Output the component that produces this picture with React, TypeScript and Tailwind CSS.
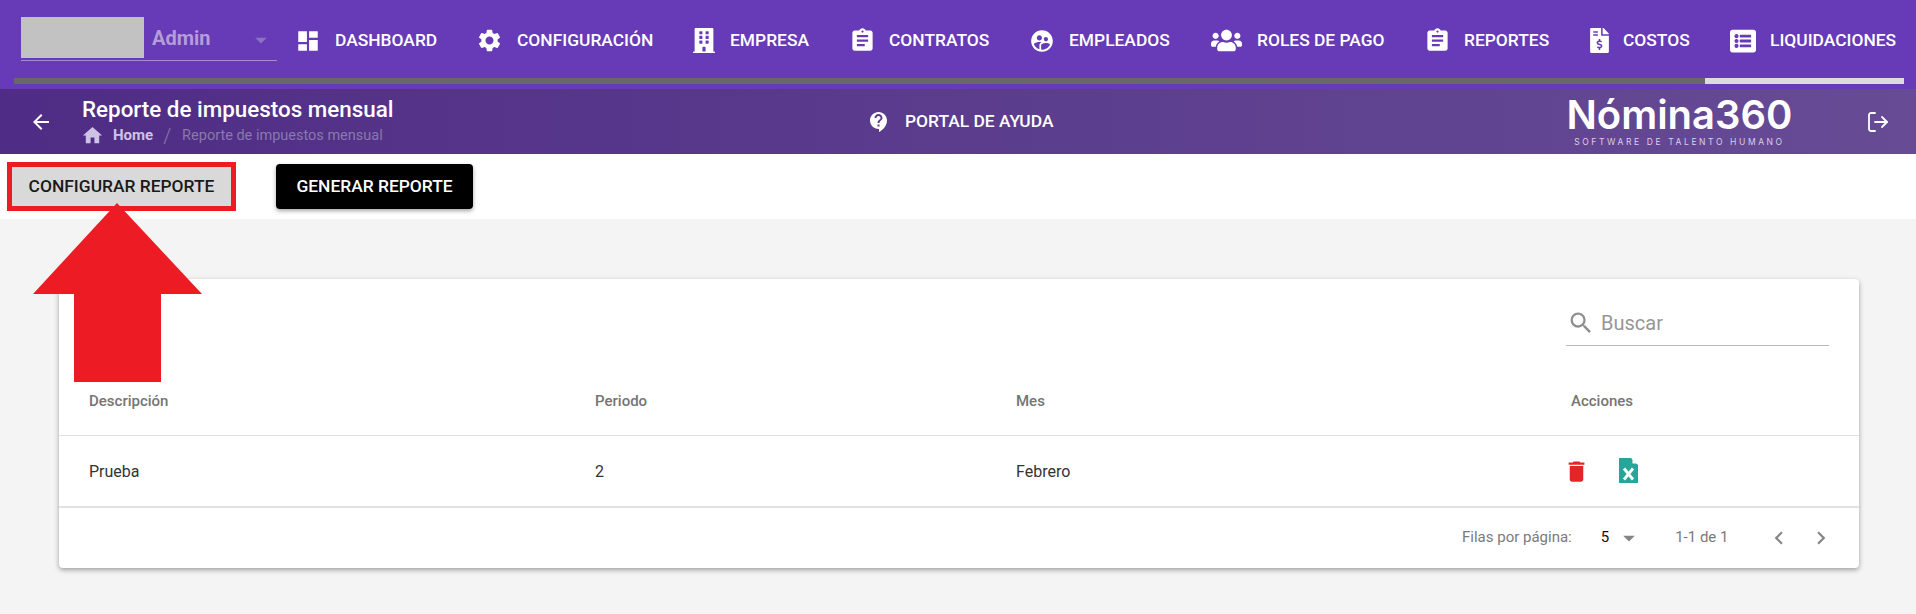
import {
  MdDashboard,
  MdSettings,
  MdAssignment,
  MdSupervisedUserCircle,
  MdArrowBack,
  MdHome,
  MdContactSupport,
  MdSearch,
  MdDelete,
  MdArrowDropDown,
  MdChevronLeft,
  MdChevronRight,
} from 'react-icons/md'
import { FaBuilding, FaUsers, FaFileInvoiceDollar, FaListAlt } from 'react-icons/fa'
import { LogOut } from 'lucide-react'

const tabs = [
  { label: 'DASHBOARD', icon: <MdDashboard className="size-[26px] -ml-[3px]" />, width: 'w-[181px]', box: 'w-[37px]' },
  { label: 'CONFIGURACIÓN', icon: <MdSettings className="size-[27px] -ml-[3px]" />, width: 'w-[214px]', box: 'w-[38px]' },
  { label: 'EMPRESA', icon: <FaBuilding className="h-[25px] w-[22px]" />, width: 'w-[159px]', box: 'w-[37px]' },
  { label: 'CONTRATOS', icon: <MdAssignment className="size-[27px] -ml-[3px]" />, width: 'w-[179px]', box: 'w-[37px]' },
  { label: 'EMPLEADOS', icon: <MdSupervisedUserCircle className="size-[26px] -ml-[2px]" />, width: 'w-[180px]', box: 'w-[38px]' },
  { label: 'ROLES DE PAGO', icon: <FaUsers className="h-[25px] w-[31px]" />, width: 'w-[216px]', box: 'w-[46px]' },
  { label: 'REPORTES', icon: <MdAssignment className="size-[27px] -ml-[3px]" />, width: 'w-[163px]', box: 'w-[37px]' },
  { label: 'COSTOS', icon: <FaFileInvoiceDollar className="h-[25px] w-[19px]" />, width: 'w-[140px]', box: 'w-[33px]' },
  { label: 'LIQUIDACIONES', icon: <FaListAlt className="h-[26px] w-[26px]" />, width: 'w-[175px]', box: 'w-[40px]' },
]

function ExcelIcon() {
  return (
    <svg viewBox="0 0 19 25" className="h-[25px] w-[19px]">
      <path d="M0 0h12l7 7v18H0z" fill="#26a69a" />
      <path d="M13.5 0.5l5 5h-5z" fill="#fff" />
      <path d="M5 10.5l9 11M14 10.5l-9 11" stroke="#fff" strokeWidth="2.8" fill="none" />
    </svg>
  )
}

export default function App() {
  return (
    <div className="relative h-[614px] w-[1916px] overflow-hidden bg-[#f4f4f4] font-['Roboto',sans-serif]">
      {/* barra superior */}
      <div className="h-[89px] bg-[#673ab7] text-white">
        <div className="flex h-[78px]">
          <div className="ml-[21px] w-[256px] shrink-0">
            <div className="flex h-[61px] items-start border-b border-[#a08ccc] pt-[17px]">
              <div className="h-[41px] w-[123px] bg-[#c2c2c2]" />
              <span className="ml-[8px] mt-[7px] text-[20px] font-bold leading-[28px] text-[#b39ddb]">Admin</span>
              <MdArrowDropDown className="ml-[36px] mt-[9px] size-[28px] text-[#8c72bf]" />
            </div>
          </div>
          <div className="ml-[21px] flex h-[81px] items-center">
            {tabs.map((t) => (
              <div key={t.label} className={`flex shrink-0 items-center ${t.width}`}>
                <div className={`flex shrink-0 items-center ${t.box}`}>{t.icon}</div>
                <span className="whitespace-nowrap text-[17.4px] font-medium leading-none">{t.label}</span>
              </div>
            ))}
          </div>
        </div>
        <div className="ml-[14px] flex h-[6px] w-[1890px]">
          <div className="w-[1691px] bg-[#686868]" />
          <div className="flex-1 bg-[#dcdcdc]" />
        </div>
      </div>

      {/* subencabezado */}
      <div className="flex h-[65px] items-center bg-gradient-to-r from-[#4f2c85] to-[#674b95] text-white">
        <MdArrowBack className="ml-[29px] size-[24px] shrink-0" />
        <div className="ml-[29px] w-[785px] shrink-0 -translate-y-[1px]">
          <div className="text-[22.4px] font-medium leading-[26px]">Reporte de impuestos mensual</div>
          <div className="mt-[4px] flex h-[20px] items-center">
            <MdHome className="-ml-[1px] size-[23px] text-[#cfc3e4]" />
            <span className="ml-[9px] text-[15px] font-bold text-[#cfc3e4]">Home</span>
            <span className="ml-[10px] text-[20px] font-light text-[#8a78ac]">/</span>
            <span className="ml-[11px] text-[14.5px] text-[#8a78ac]">Reporte de impuestos mensual</span>
          </div>
        </div>
        <MdContactSupport className="size-[24px] shrink-0" />
        <span className="ml-[14px] text-[17.4px] font-medium">PORTAL DE AYUDA</span>
        <div className="ml-[515px] flex w-[222px] shrink-0 flex-col items-center">
          <div className="h-[38px] whitespace-nowrap font-['Inter',sans-serif] text-[40px] font-semibold leading-[36px]">Nómina360</div>
          <div className="mt-[2px] whitespace-nowrap font-['Inter',sans-serif] text-[8.5px] leading-[10px] tracking-[2.6px] text-[#d9d0e8]">SOFTWARE DE TALENTO HUMANO</div>
        </div>
        <LogOut className="ml-[76px] size-[24px] shrink-0" strokeWidth={1.8} />
      </div>

      {/* acciones */}
      <div className="flex h-[65px] items-center bg-white pl-[7px]">
        <button className="h-[49px] w-[229px] border-[5px] border-[#ed1c24] bg-[#d9d9d9] text-[17.4px] font-medium text-[#1a1a1a]">
          CONFIGURAR REPORTE
        </button>
        <button className="ml-[40px] h-[45px] w-[197px] rounded-[4px] bg-black text-[17.4px] font-medium text-white shadow-[0_2px_4px_rgba(0,0,0,0.35)]">
          GENERAR REPORTE
        </button>
      </div>

      {/* tabla */}
      <div className="ml-[59px] mt-[60px] h-[289px] w-[1800px] rounded-[4px] bg-white shadow-[0_2px_5px_rgba(0,0,0,0.35)]">
        <div className="flex h-[89px] justify-end pr-[30px] pt-[30px]">
          <div className="flex h-[37px] w-[263px] items-start border-b border-[#b9b9b9] pl-[1px]">
            <MdSearch className="size-[28px] text-[#8f8f8f]" />
            <span className="ml-[6px] text-[20px] leading-[28px] text-[#969696]">Buscar</span>
          </div>
        </div>
        <div className="grid h-[68px] grid-cols-[506px_421px_555px_1fr] items-center border-b border-[#e2e2e2] pl-[30px] text-[15px] font-medium text-[#757575]">
          <span>Descripción</span>
          <span>Periodo</span>
          <span>Mes</span>
          <span>Acciones</span>
        </div>
        <div className="grid h-[72px] grid-cols-[506px_421px_555px_1fr] items-center border-b-2 border-[#e2e2e2] pl-[30px] pt-[1px] text-[16px] text-[#333333]">
          <span>Prueba</span>
          <span>2</span>
          <span>Febrero</span>
          <div className="flex items-center">
            <MdDelete className="-ml-[8px] size-[27px] text-[#e02727]" />
            <div className="ml-[29px] -translate-y-[1px]">
              <ExcelIcon />
            </div>
          </div>
        </div>
        <div className="flex h-[59px] items-center text-[15px] text-[#7a7a7a]">
          <span className="ml-[1403px]">Filas por página:</span>
          <span className="ml-[29px] text-[#111111]">5</span>
          <MdArrowDropDown className="ml-[6px] size-[28px] text-[#858585]" />
          <span className="ml-[32px]">1-1 de 1</span>
          <MdChevronLeft className="ml-[38px] size-[26px] text-[#858585]" />
          <MdChevronRight className="ml-[16px] size-[26px] text-[#858585]" />
        </div>
      </div>

      {/* flecha de anotación */}
      <svg viewBox="0 0 170 180" className="absolute left-[33px] top-[203px] h-[180px] w-[170px]">
        <path d="M84 0L169 91H128V179H41V91H0z" fill="#ed1c24" />
      </svg>
    </div>
  )
}
